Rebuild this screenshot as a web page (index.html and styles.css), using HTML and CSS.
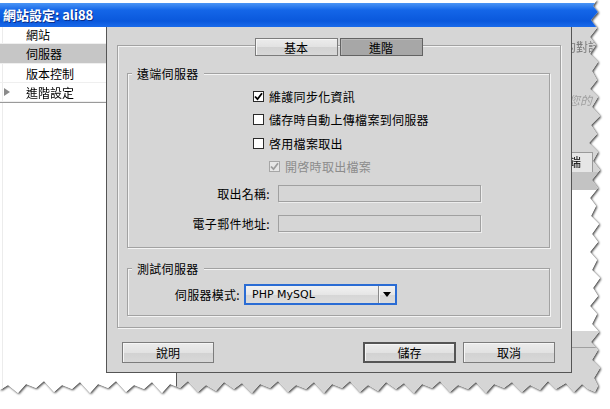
FILE: index.html
```html
<!DOCTYPE html>
<html lang="zh-Hant">
<head>
    <meta charset="UTF-8">
    <title>網站設定: ali88</title>
    <link rel="stylesheet" href="styles.css">
</head>
<body>
    <div class="shot">
        <div class="screen">
            <div class="titlebar">網站設定: ali88</div>

            <div class="main">
                <aside class="sidebar">
                    <ul class="cats">
                        <li class="first">網站</li>
                        <li class="on">伺服器</li>
                        <li>版本控制</li>
                        <li class="more">
                            <svg width="6" height="8" viewBox="0 0 6 8"><path d="M0 0 L6 4 L0 8 Z" fill="#8a8a8a"/></svg>
                            進階設定
                        </li>
                    </ul>
                </aside>

                <section class="pane">
                    <div class="pane-head">
                        <p class="ghost">設定連線到遠端伺服器的對話</p>
                        <p class="ghost hint">請輸入您的</p>
                    </div>
                    <div class="pane-tabs"><span class="ptab">遠端</span></div>
                    <div class="pane-bar"></div>
                    <div class="pane-list"></div>
                    <div class="pane-foot"><div class="foot-row"></div></div>
                </section>
            </div>

            <!-- the modal dialog sits over the site settings page -->
            <div class="dialog">
                <div class="panel">
                    <div class="tabs">
                        <button class="tab">基本</button>
                        <button class="tab active">進階</button>
                    </div>

                    <div class="group remote">
                        <div class="legend">遠端伺服器</div>
                        <div class="checks">
                            <label class="check">
                                <span class="box">
                                    <svg width="9" height="9" viewBox="0 0 9 9"><path d="M1 4.5 L3.5 7.2 L8 1.2" fill="none" stroke="#000" stroke-width="1.8"/></svg>
                                </span>
                                維護同步化資訊
                            </label>
                            <label class="check"><span class="box"></span>儲存時自動上傳檔案到伺服器</label>
                            <label class="check"><span class="box"></span>啓用檔案取出</label>
                            <label class="check sub disabled">
                                <span class="box">
                                    <svg width="9" height="9" viewBox="0 0 9 9"><path d="M1 4.5 L3.5 7.2 L8 1.2" fill="none" stroke="#9c9c9c" stroke-width="1.8"/></svg>
                                </span>
                                開啓時取出檔案
                            </label>
                        </div>
                        <div class="fields">
                            <label>取出名稱:</label>
                            <span class="input"></span>
                            <label>電子郵件地址:</label>
                            <span class="input"></span>
                        </div>
                    </div>

                    <div class="group testing">
                        <div class="legend">測試伺服器</div>
                        <div class="model">
                            <label>伺服器模式:</label>
                            <div class="select">
                                <span class="value">PHP MySQL</span>
                                <span class="drop"><i class="arrow"></i></span>
                            </div>
                        </div>
                    </div>
                </div>

                <div class="actions">
                    <button class="btn">說明</button>
                    <span class="spacer"></span>
                    <button class="btn default">儲存</button>
                    <button class="btn">取消</button>
                </div>
            </div>
        </div>
    </div>
</body>
</html>
```

FILE: styles.css
```css
* {
    box-sizing: border-box;
}
body {
    margin: 0;
    background: #fff;
    font-family: "Noto Sans CJK TC", "Liberation Sans", sans-serif;
    font-size: 12px;
    color: #000;
}
.shot {
    width: 610px;
    height: 409px;
    filter: drop-shadow(1px 1px 1px rgba(0, 0, 0, 0.75));
}
.screen {
    position: relative;
    width: 604px;
    height: 398px;
    background: #fff;
    display: flex;
    flex-direction: column;
    clip-path: polygon(0 0, 597px 0, 593px 6px, 598px 12px, 591px 20px, 597px 28px, 590px 37px, 596px 45px, 590px 54px, 598px 62px, 592px 71px, 597px 80px, 590px 89px, 598px 97px, 592px 107px, 600px 116px, 591px 125px, 597px 134px, 589px 143px, 598px 152px, 593px 161px, 600px 170px, 592px 180px, 598px 188px, 590px 198px, 596px 206px, 591px 216px, 599px 224px, 592px 234px, 598px 242px, 590px 252px, 597px 260px, 592px 270px, 600px 278px, 593px 288px, 598px 296px, 590px 306px, 597px 314px, 592px 324px, 599px 332px, 591px 342px, 598px 350px, 592px 360px, 600px 368px, 594px 378px, 598px 386px, 595px 392px, 588px 389px, 582px 384px, 574px 392px, 566px 383px, 556px 389px, 548px 381px, 540px 390px, 530px 385px, 522px 392px, 512px 382px, 504px 388px, 494px 384px, 486px 393px, 476px 382px, 468px 389px, 458px 385px, 450px 392px, 440px 381px, 432px 388px, 422px 384px, 414px 393px, 404px 383px, 396px 389px, 386px 382px, 378px 391px, 368px 385px, 360px 392px, 350px 381px, 342px 388px, 332px 384px, 324px 393px, 314px 382px, 306px 389px, 296px 385px, 288px 392px, 278px 381px, 270px 388px, 260px 384px, 252px 393px, 242px 383px, 234px 389px, 224px 382px, 216px 391px, 206px 385px, 198px 392px, 188px 381px, 180px 388px, 170px 384px, 162px 393px, 152px 382px, 144px 389px, 134px 385px, 126px 392px, 116px 381px, 108px 388px, 98px 384px, 90px 393px, 80px 382px, 72px 389px, 62px 385px, 54px 392px, 44px 381px, 36px 388px, 26px 384px, 18px 393px, 8px 385px, 0 390px);
}

/* title bar */
.titlebar {
    margin-top: 3px;
    height: 24px;
    line-height: 24px;
    padding-left: 3px;
    color: #fff;
    font-weight: bold;
    font-size: 13px;
    background: linear-gradient(#4b95f5, #1466e8 30%, #0a58dc 75%, #1a6aea);
    text-shadow: 1px 1px 0 #0b2f8a;
}

/* page behind the dialog */
.main {
    flex: 1;
    display: grid;
    grid-template-columns: 177px 1fr;
}
.sidebar {
    background: #fff;
    border-left: 1px solid #ececec;
    margin-left: 2px;
    border-right: 1px solid #555;
}
.cats {
    list-style: none;
    margin: 0 0 0 -3px;
    padding: 0;
    border-bottom: 1px solid #9a9a9a;
}
.cats li {
    height: 19px;
    line-height: 19px;
    padding-left: 26px;
    border-bottom: 1px solid #efefef;
}
.cats li.first {
    height: 17px;
    line-height: 16px;
}
.cats li.on {
    height: 20px;
    background: #c6c6c6;
}
.cats li.more {
    display: flex;
    align-items: center;
    padding-left: 4px;
    gap: 16px;
}
.pane {
    background: #d5d5d5;
    display: flex;
    flex-direction: column;
    overflow: hidden;
}
.pane-head {
    height: 125px;
}
.ghost {
    margin: 12px 0 0;
    line-height: 16px;
    text-align: right;
    white-space: nowrap;
    padding-right: 4px;
    color: #7a7a7a;
}
.ghost.hint {
    margin-top: 37px;
    padding-right: 12px;
    font-style: italic;
    color: #a0a0a0;
}
.pane-tabs {
    height: 20px;
    display: flex;
    justify-content: flex-end;
    padding-right: 11px;
}
.ptab {
    height: 20px;
    line-height: 18px;
    padding: 0 11px 0 6px;
    background: #e6e6e6;
    border: 1px solid #9a9a9a;
    border-bottom: none;
}
.pane-bar {
    height: 18px;
    background: #c3c3c3;
}
.pane-list {
    height: 141px;
    background: #fff;
}
.pane-foot {
    flex: 1;
}
.foot-row {
    height: 17px;
    border-bottom: 1px solid #a0a0a0;
}

/* dialog */
.dialog {
    position: absolute;
    left: 106px;
    top: 27px;
    width: 466px;
    height: 346px;
    background: #d6d6d6;
    border: 1px solid #555;
    border-top: none;
    padding: 18px 10px 0 10px;
}
.panel {
    border: 1px solid #a2a2a2;
    box-shadow: 1px 1px 0 #f4f4f4, inset 1px 1px 0 #f4f4f4;
    padding: 0 10px 11px 9px;
}
.tabs {
    display: flex;
    justify-content: center;
    gap: 2px;
    margin-top: -8px;
}
.tab,
.btn {
    font-family: inherit;
    font-size: 12px;
    color: #000;
    padding: 0;
    border: 1px solid #7c7c7c;
    background: linear-gradient(#ececec, #e2e2e2 50%, #d2d2d2 52%, #d8d8d8);
    box-shadow: inset 1px 1px 0 #f6f6f6;
}
.tab {
    width: 83px;
    height: 18px;
    line-height: 15px;
}
.tab.active {
    background: #a7a7a7;
    border-color: #636363;
    box-shadow: inset 1px 1px 0 #b8b8b8;
}

.group {
    border: 1px solid #a2a2a2;
    box-shadow: 1px 1px 0 #f4f4f4, inset 1px 1px 0 #f4f4f4;
}
.group.remote {
    margin-top: 17px;
    padding-bottom: 8.5px;
}
.group.testing {
    margin-top: 20px;
    padding-bottom: 10px;
}
.legend {
    width: fit-content;
    margin: -8px 0 0 4px;
    padding: 0 5px;
    height: 16px;
    line-height: 16px;
    background: #d6d6d6;
    letter-spacing: 0.3px;
}
.checks {
    margin-top: 2.5px;
    padding-left: 125px;
}
.check {
    display: flex;
    align-items: center;
    height: 23.5px;
    letter-spacing: 0.3px;
}
.check.sub {
    padding-left: 16px;
}
.check.disabled {
    color: #8c8c8c;
}
.box {
    width: 11px;
    height: 11px;
    margin-right: 5px;
    background: #fff;
    border: 1px solid #2a2a2a;
    display: flex;
    align-items: center;
    justify-content: center;
}
.check.disabled .box {
    background: #e6e6e6;
    border-color: #a6a6a6;
}
.fields {
    display: grid;
    grid-template-columns: 144px 203px;
    grid-auto-rows: 30px;
    column-gap: 6px;
    align-items: center;
}
.fields label,
.model label {
    text-align: right;
    padding-right: 2px;
    letter-spacing: 0.3px;
}
.input {
    height: 17px;
    border: 1px solid #a0a0a0;
    box-shadow: 1px 1px 0 #ededed;
    background: #d6d6d6;
}
.model {
    display: grid;
    grid-template-columns: 114px 153px;
    column-gap: 2px;
    align-items: center;
    margin-top: 7px;
}
.select {
    height: 21px;
    display: flex;
    border: 2px solid #2a6cd4;
    background: linear-gradient(#f2f2f2, #e6e6e6 50%, #d6d6d6 52%, #dcdcdc);
}
.select .value {
    flex: 1;
    padding-left: 6px;
    line-height: 17px;
    font-family: "DejaVu Sans", sans-serif;
    font-size: 11px;
}
.drop {
    width: 17px;
    border-left: 1px solid #8a8a8a;
    box-shadow: inset 1px 0 0 #f6f6f6;
    display: flex;
    align-items: center;
    justify-content: center;
}
.arrow {
    width: 0;
    height: 0;
    border-left: 4px solid transparent;
    border-right: 4px solid transparent;
    border-top: 5px solid #000;
}

.actions {
    display: flex;
    gap: 7px;
    margin-top: 14px;
    padding: 0 6px 0 5px;
}
.spacer {
    flex: 1;
}
.btn {
    width: 92px;
    height: 21px;
    line-height: 17px;
}
.btn.default {
    width: 93px;
    border: 2px solid #555;
}
```
